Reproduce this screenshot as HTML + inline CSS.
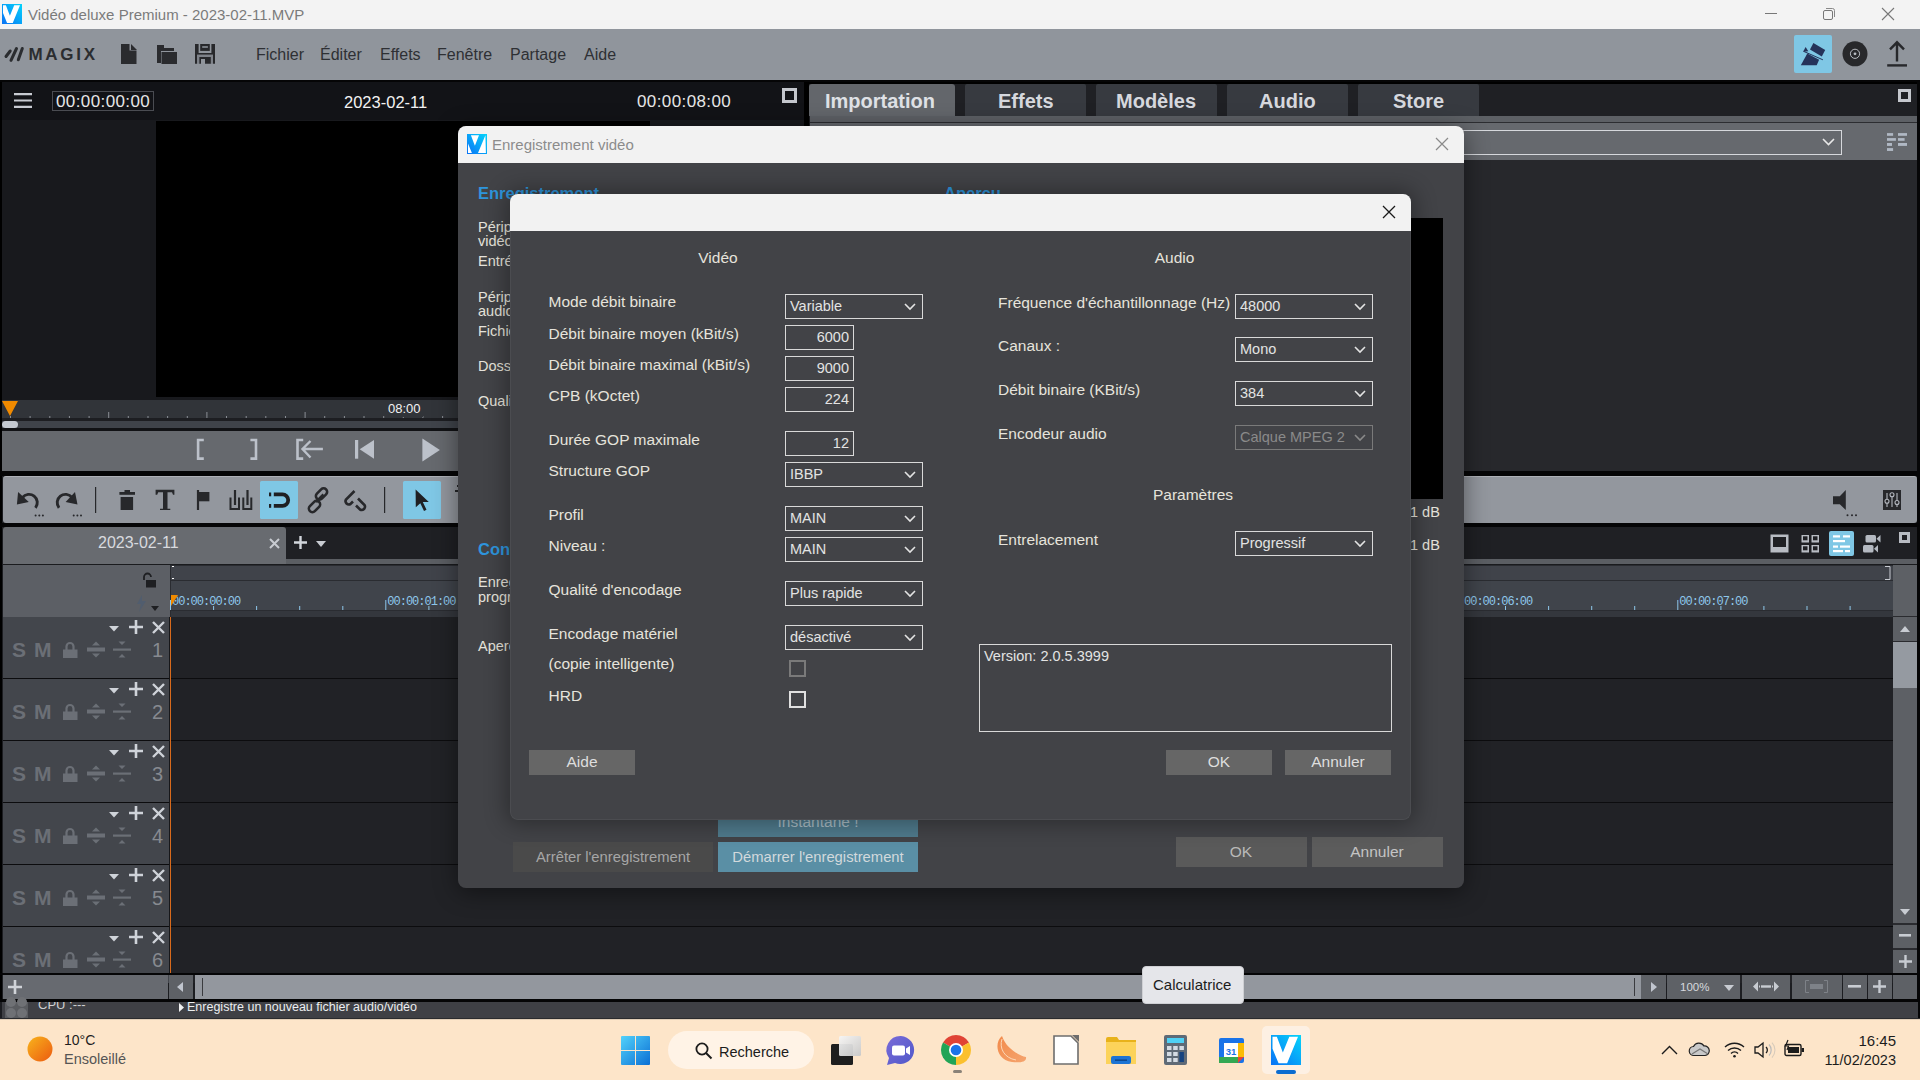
<!DOCTYPE html>
<html><head><meta charset="utf-8">
<style>
*{margin:0;padding:0;box-sizing:border-box}
html,body{width:1920px;height:1080px;overflow:hidden;background:#1c1d21;font-family:"Liberation Sans",sans-serif}
.a{position:absolute}
.t{position:absolute;white-space:nowrap;line-height:1}
svg{position:absolute;overflow:visible}
</style></head><body>
<!-- ============ TITLE BAR ============ -->
<div class="a" style="left:0;top:0;width:1920px;height:29px;background:#f3f3f3"></div>
<svg style="left:2px;top:4px" width="20" height="20" viewBox="0 0 20 20"><defs><linearGradient id="vg" x1="0" y1="1" x2="1" y2="0"><stop offset="0" stop-color="#0a72f5"/><stop offset="1" stop-color="#05d4fb"/></linearGradient></defs><rect width="20" height="20" fill="url(#vg)"/><path d="M1 1.2 L3.9 1.2 L7.9 11.7 L12.2 1.2 L18 1.2 L10.75 18.9 L5.05 18.9 L1 9.1 Z" fill="#fff"/></svg>
<div class="t" style="left:28px;top:7px;font-size:15px;color:#7b7b7b">Vidéo deluxe Premium - 2023-02-11.MVP</div>
<div class="a" style="left:1765px;top:13px;width:12px;height:1px;background:#777"></div>
<svg style="left:1822px;top:7px" width="14" height="14" viewBox="0 0 14 14"><rect x="1.5" y="3.5" width="9" height="9" rx="1.5" fill="none" stroke="#777" stroke-width="1"/><path d="M4 1.5 H10.5 a2 2 0 0 1 2 2 V10" fill="none" stroke="#888" stroke-width="1"/></svg>
<svg style="left:1882px;top:8px" width="12" height="12" viewBox="0 0 12 12"><path d="M0 0 L12 12 M12 0 L0 12" stroke="#777" stroke-width="1.1"/></svg>

<!-- ============ MENU BAR ============ -->
<div class="a" style="left:0;top:29px;width:1920px;height:51px;background:#90959c"></div>
<svg style="left:0;top:40px" width="28" height="26" viewBox="0 40 28 26"><path d="M6 56.5 L10.2 51 M11 60.3 L16.5 48.5 M18.3 59.8 L22.3 48.5" stroke="#2b2d30" stroke-width="3" stroke-linecap="round"/></svg>
<div class="t" style="left:28.5px;top:46px;font-size:17px;font-weight:bold;color:#2b2d30;letter-spacing:2.7px">MAGIX</div>
<svg style="left:121px;top:44px" width="16" height="20" viewBox="0 0 16 20"><path d="M0 0 H8.5 V6.5 H15.5 V20 H0 Z" fill="#2a2b2e"/><path d="M10 0 L16 6 H10 Z" fill="#2a2b2e"/></svg>
<svg style="left:157px;top:45px" width="20" height="19" viewBox="0 0 20 19"><path d="M0 0 H7 V3 H17 V6 H4 V18 H0 Z" fill="#2a2b2e"/><path d="M4.5 7 H20 V19 H4.5 Z" fill="#2a2b2e"/></svg>
<svg style="left:190px;top:40px" width="30" height="28" viewBox="0 0 30 28"><g fill="#27282b"><path d="M5 4 H8.6 V13 H21.4 V4 H25 V23.7 H23 V14.8 H7 V23.7 H5 Z"/><rect x="10.2" y="4" width="9.6" height="6.9"/><path d="M9.2 17 H20.9 V23.7 H15 V18.9 H11 V23.7 H9.2 Z"/></g><rect x="12.2" y="6.1" width="5.7" height="1.8" fill="#80848b"/><rect x="7" y="14.8" width="2.2" height="8.9" fill="#7e8289"/><rect x="20.9" y="14.8" width="2.1" height="8.9" fill="#7e8289"/><rect x="9.2" y="14.8" width="11.7" height="2.2" fill="#7e8289"/></svg>
<div class="t" style="left:256px;top:46.5px;font-size:16px;color:#2e3034">Fichier</div>
<div class="t" style="left:320px;top:46.5px;font-size:16px;color:#2e3034">Éditer</div>
<div class="t" style="left:380px;top:46.5px;font-size:16px;color:#2e3034">Effets</div>
<div class="t" style="left:437px;top:46.5px;font-size:16px;color:#2e3034">Fenêtre</div>
<div class="t" style="left:510px;top:46.5px;font-size:16px;color:#2e3034">Partage</div>
<div class="t" style="left:584px;top:46.5px;font-size:16px;color:#2e3034">Aide</div>
<div class="a" style="left:1794px;top:35px;width:38px;height:38px;background:#7fc7e5;border-radius:2px"></div>
<svg style="left:1794px;top:35px" width="38" height="38" viewBox="0 0 38 38"><path d="M19.4 7.9 L31.2 15 L27.8 21.4 L16 14.6 Z" fill="#25335a"/><path d="M13.3 18.4 L25.1 24.8 L22.7 30.2 L6.8 30.2 Z" fill="#25335a"/><path d="M11.6 11.9 L9.2 16.7 L14.3 16.3 Z" fill="#25335a"/><path d="M9.5 16.3 L28.9 24.8" stroke="#25335a" stroke-width="1"/></svg>
<svg style="left:1842px;top:41px" width="26" height="26" viewBox="0 0 26 26"><circle cx="13" cy="12.8" r="12.5" fill="#27282b"/><circle cx="13" cy="12.8" r="4.6" fill="none" stroke="#b8bcc2" stroke-width="1"/><circle cx="13" cy="12.8" r="1.4" fill="#b8bcc2"/></svg>
<svg style="left:1886px;top:41px" width="22" height="27" viewBox="0 0 22 27"><path d="M11 1.5 V20.5 M4 8.3 L11 1.3 L18 8.3" fill="none" stroke="#27282b" stroke-width="2.4"/><rect x="1.2" y="23.2" width="19.8" height="2.4" fill="#27282b"/></svg>
<div class="a" style="left:0;top:80px;width:1920px;height:2px;background:#050506"></div>

<!-- ============ LEFT PREVIEW PANEL ============ -->
<div class="a" style="left:0;top:82px;width:2px;height:920px;background:#000"></div>
<div class="a" style="left:2px;top:82px;width:802px;height:38px;background:#121317"></div>
<svg style="left:14px;top:93px" width="18" height="15" viewBox="0 0 18 15"><path d="M0 1.2 H18 M0 7.5 H18 M0 13.8 H18" stroke="#c8cbd2" stroke-width="2.2"/></svg>
<div class="a" style="left:52px;top:91px;width:102px;height:20px;border:1px solid #4a4c52"></div>
<div class="t" style="left:56px;top:93px;font-size:17px;color:#e6e6e6;letter-spacing:0.4px">00:00:00:00</div>
<div class="t" style="left:344px;top:93.5px;font-size:16.5px;color:#f2f2f2">2023-02-11</div>
<div class="t" style="left:637px;top:93px;font-size:17px;color:#e6e6e6;letter-spacing:0.4px">00:00:08:00</div>
<div class="a" style="left:782px;top:88px;width:15px;height:15px;border:3px solid #c4c7cd"></div>
<div class="a" style="left:2px;top:120px;width:804px;height:280px;background:#18191d"></div>
<div class="a" style="left:156px;top:121px;width:494px;height:276px;background:#000"></div>
<!-- ruler -->
<div class="a" style="left:2px;top:400px;width:804px;height:18px;background:#313439"></div>
<svg style="left:0;top:400px" width="806" height="18" viewBox="0 0 806 18"><g fill="#8a8e95"><rect x="10.0" y="16" width="1" height="2"/><rect x="29.6" y="16" width="1" height="2"/><rect x="49.3" y="16" width="1" height="2"/><rect x="68.9" y="16" width="1" height="2"/><rect x="88.6" y="16" width="1" height="2"/><rect x="108.2" y="12" width="1" height="6"/><rect x="127.8" y="16" width="1" height="2"/><rect x="147.5" y="16" width="1" height="2"/><rect x="167.1" y="16" width="1" height="2"/><rect x="186.8" y="16" width="1" height="2"/><rect x="206.4" y="12" width="1" height="6"/><rect x="226.0" y="16" width="1" height="2"/><rect x="245.7" y="16" width="1" height="2"/><rect x="265.3" y="16" width="1" height="2"/><rect x="285.0" y="16" width="1" height="2"/><rect x="304.6" y="12" width="1" height="6"/><rect x="324.2" y="16" width="1" height="2"/><rect x="343.9" y="16" width="1" height="2"/><rect x="363.5" y="16" width="1" height="2"/><rect x="383.2" y="16" width="1" height="2"/><rect x="402.8" y="12" width="1" height="6"/><rect x="422.4" y="16" width="1" height="2"/><rect x="442.1" y="16" width="1" height="2"/><rect x="461.7" y="16" width="1" height="2"/><rect x="481.4" y="16" width="1" height="2"/><rect x="501.0" y="12" width="1" height="6"/><rect x="520.6" y="16" width="1" height="2"/><rect x="540.3" y="16" width="1" height="2"/><rect x="559.9" y="16" width="1" height="2"/><rect x="579.6" y="16" width="1" height="2"/><rect x="599.2" y="12" width="1" height="6"/><rect x="618.8" y="16" width="1" height="2"/><rect x="638.5" y="16" width="1" height="2"/><rect x="658.1" y="16" width="1" height="2"/><rect x="677.8" y="16" width="1" height="2"/><rect x="697.4" y="12" width="1" height="6"/><rect x="717.0" y="16" width="1" height="2"/><rect x="736.7" y="16" width="1" height="2"/><rect x="756.3" y="16" width="1" height="2"/><rect x="776.0" y="16" width="1" height="2"/><rect x="795.6" y="12" width="1" height="6"/></g></svg>
<svg style="left:2px;top:401px" width="16" height="15" viewBox="0 0 16 15"><path d="M0 0 H16 L8 15 Z" fill="#f08a00"/></svg>
<div class="t" style="left:386px;top:402px;font-size:13px;color:#f2f2f2;background:#313439;padding:0 2px 2px 2px">08:00</div>
<div class="a" style="left:2px;top:418px;width:804px;height:3px;background:#1d1e22"></div>
<div class="a" style="left:2px;top:421px;width:804px;height:7px;background:#3f434a"></div>
<div class="a" style="left:2px;top:421px;width:16px;height:7px;background:#c4c9d1;border-radius:4px"></div>
<div class="a" style="left:2px;top:428px;width:804px;height:3px;background:#111215"></div>
<!-- transport -->
<div class="a" style="left:2px;top:431px;width:806px;height:40px;background:#66696e"></div>
<svg style="left:0;top:430px" width="460" height="42" viewBox="0 430 460 42"><g fill="none" stroke="#bcc1ca" stroke-width="2.6">
<path d="M203.8 440 H198.1 V458.6 H203.8"/>
<path d="M250.4 440 H256 V458.6 H250.4"/>
<path d="M303.2 440 H297.5 V458.6 H303.2"/>
<path d="M322.9 449 H303.5 M310.5 441 L302.5 449 L310.5 457.5" stroke-width="2.4"/>
</g><g fill="#bcc1ca">
<rect x="355" y="440" width="3.2" height="18.7"/>
<path d="M374 440 V458.7 L359.7 449.35 Z"/>
<path d="M422.4 438.5 V461.4 L439.9 449.95 Z"/>
</g></svg>
<div class="a" style="left:0;top:471px;width:1920px;height:5px;background:#050506"></div>

<!-- ============ RIGHT PANEL ============ -->
<div class="a" style="left:804px;top:82px;width:5px;height:389px;background:#000"></div>
<div class="a" style="left:809px;top:82px;width:1108px;height:2px;background:#000"></div><div class="a" style="left:809px;top:84px;width:1108px;height:33px;background:#1f2024"></div>
<div class="a" style="left:809px;top:84px;width:146px;height:32px;background:#63666b;border-radius:3px 3px 0 0"></div>
<div class="t" style="left:825px;top:91px;font-size:20px;font-weight:bold;color:#dfe1e6">Importation</div>
<div class="a" style="left:965px;top:84px;width:121px;height:32px;background:#373a40;border-radius:2px 2px 0 0"></div>
<div class="t" style="left:998px;top:91px;font-size:20px;font-weight:bold;color:#d6d8de">Effets</div>
<div class="a" style="left:1096px;top:84px;width:121px;height:32px;background:#373a40;border-radius:2px 2px 0 0"></div>
<div class="t" style="left:1116px;top:91px;font-size:20px;font-weight:bold;color:#d6d8de">Modèles</div>
<div class="a" style="left:1227px;top:84px;width:121px;height:32px;background:#373a40;border-radius:2px 2px 0 0"></div>
<div class="t" style="left:1259px;top:91px;font-size:20px;font-weight:bold;color:#d6d8de">Audio</div>
<div class="a" style="left:1358px;top:84px;width:121px;height:32px;background:#373a40;border-radius:2px 2px 0 0"></div>
<div class="t" style="left:1393px;top:91px;font-size:20px;font-weight:bold;color:#d6d8de">Store</div>
<div class="a" style="left:1898px;top:89px;width:13px;height:13px;border:3px solid #c4c7cd"></div>
<div class="a" style="left:810px;top:116px;width:1107px;height:7px;background:#5d6065;border-bottom:1px solid #2c2d31"></div>
<div class="a" style="left:810px;top:123px;width:1107px;height:37px;background:#66696e"></div>
<div class="a" style="left:1300px;top:130px;width:542px;height:25px;border:1px solid #d6d8dc;background:#66696e"></div>
<svg style="left:1822px;top:138px" width="13" height="8" viewBox="0 0 13 8"><path d="M1 1 L6.5 6.5 L12 1" fill="none" stroke="#e8e8e8" stroke-width="1.6"/></svg>
<svg style="left:1880px;top:128px" width="32" height="28" viewBox="0 0 32 28"><g fill="#b0b8c4"><rect x="7" y="5.1" width="6.1" height="2.7"/><rect x="18" y="5.1" width="9" height="2.7"/><rect x="7" y="10.1" width="8.9" height="2.7"/><rect x="18" y="10.1" width="6.6" height="2.7"/><rect x="7" y="15" width="5" height="2.9"/><rect x="18" y="15" width="9" height="2.9"/><rect x="7" y="20.1" width="6.1" height="2.85"/></g></svg>
<div class="a" style="left:810px;top:160px;width:1107px;height:311px;background:#27282c"></div>
<div class="a" style="left:1917px;top:82px;width:3px;height:937px;background:#060607"></div>

<!-- ============ TOOLBAR ============ -->
<div class="a" style="left:3px;top:476px;width:1914px;height:47px;background:#93979e;border-radius:3px;border-top:1px solid #aeb1b7"></div>
<svg style="left:0;top:476px" width="460" height="47" viewBox="0 476 460 47">
<g fill="#27282b" stroke="none">
<path d="M16.9 504.4 L18.1 491.9 L28.75 501.9 Z"/>
<circle cx="35.6" cy="515.4" r="1"/><circle cx="39.3" cy="515.4" r="1"/><circle cx="42.9" cy="515.4" r="1"/>
<path d="M77.5 504.4 L75 491.9 L65.6 501.9 Z"/>
<circle cx="73.7" cy="515.4" r="1"/><circle cx="77.4" cy="515.4" r="1"/><circle cx="81" cy="515.4" r="1"/>
<rect x="95" y="487" width="1.2" height="26"/>
<rect x="119.4" y="492" width="15.6" height="2.8"/><rect x="124.5" y="490" width="5.5" height="2.5"/><path d="M120.6 497 H133.1 V510 H120.6 Z"/>
<path d="M155.6 489.8 H174.4 V494.8 H173 L172 492.2 H167.5 V508.7 H170.3 V510 H160 V508.7 H163 V492.2 H158.2 L157.2 494.8 H155.6 Z"/>
<rect x="196.9" y="490" width="2.2" height="20"/><rect x="199" y="492" width="10.4" height="9.3"/>
<rect x="384" y="487" width="1.2" height="26"/>
</g>
<g fill="none" stroke="#27282b">
<path d="M22.5 497.5 A7.2 7.2 0 1 1 35.5 507.8" stroke-width="2.9"/>
<path d="M72 497.5 A7.2 7.2 0 1 0 59 507.8" stroke-width="2.9"/>
<path d="M230.5 497.5 V509 H239 V497.5 M243.3 497.5 V509 H251.3 V497.5" stroke-width="2"/>
<path d="M235 490 V505 M247.5 490 V505" stroke-width="2.2"/>
</g>
<rect x="260" y="481" width="38" height="38" rx="1.5" fill="#7fc7e5"/>
<path d="M273.8 494.4 H282.5 A5.7 5.7 0 0 1 282.5 505.8 H273.8" fill="none" stroke="#1f2023" stroke-width="3.8"/>
<rect x="269" y="492.5" width="2.2" height="3.8" fill="#1f2023"/><rect x="269" y="504" width="2.2" height="3.8" fill="#1f2023"/>
<g fill="none" stroke="#27282b" stroke-width="2.6">
<rect x="318" y="487.5" width="7" height="13" rx="3.5" transform="rotate(45 321.5 494)"/>
<rect x="311" y="500" width="7" height="13" rx="3.5" transform="rotate(45 314.5 506.5)"/>
<path d="M316 502 L323.5 494.5"/>
<path d="M354.5 491 L346 499.5 A3.3 3.3 0 0 0 350.5 504 L353 501.5"/>
<path d="M358 498.5 L364.5 505 A3.3 3.3 0 0 1 360 509.5 L356 505.5"/>
</g>
<rect x="403" y="481" width="38" height="38" rx="1.5" fill="#7fc7e5"/>
<path d="M415.6 489.4 L428.8 501.9 L422.8 502 L426.5 509.8 L424 511 L420.3 503.2 L415.8 507.2 Z" fill="#1f2023"/>
<path d="M457 486 H460 M455 491 H460" stroke="#27282b" stroke-width="2.2"/>
</svg>
<svg style="left:1833px;top:490px" width="25" height="27" viewBox="0 0 25 27"><path d="M0 6.2 H6.8 L12.8 0 V20 L6.8 14.2 H0 Z" fill="#27282b"/><circle cx="14.5" cy="25.2" r="1" fill="#27282b"/><circle cx="19" cy="25.2" r="1" fill="#27282b"/><circle cx="23" cy="25.2" r="1" fill="#27282b"/></svg>
<svg style="left:1883px;top:490px" width="18" height="20" viewBox="0 0 18 20"><rect x="0" y="0" width="18" height="20" fill="#27282b"/><path d="M4 3 V17 M9 3 V17 M14 3 V17" stroke="#b4b8bf" stroke-width="1.1"/><circle cx="4" cy="11.2" r="2" fill="#27282b" stroke="#b4b8bf" stroke-width="1.1"/><circle cx="9" cy="4.8" r="2" fill="#27282b" stroke="#b4b8bf" stroke-width="1.1"/><circle cx="14" cy="12.5" r="2" fill="#27282b" stroke="#b4b8bf" stroke-width="1.1"/></svg>
<div class="a" style="left:0;top:523px;width:1920px;height:4px;background:#050506"></div>

<!-- ============ TIMELINE ============ -->
<div class="a" style="left:3px;top:527px;width:1914px;height:32px;background:#1f2024"></div>
<div class="a" style="left:3px;top:527px;width:283px;height:38px;background:#686b70;border-radius:3px 3px 0 0"></div>
<div class="t" style="left:98px;top:535px;font-size:16px;color:#d8dadf">2023-02-11</div>
<svg style="left:269px;top:538px" width="11" height="11" viewBox="0 0 11 11"><path d="M1 1 L10 10 M10 1 L1 10" stroke="#c8cbd1" stroke-width="2"/></svg>
<svg style="left:294px;top:536px" width="13" height="13" viewBox="0 0 13 13"><path d="M6.5 0 V13 M0 6.5 H13" stroke="#d2d6dc" stroke-width="2.4"/></svg>
<svg style="left:316px;top:541px" width="10" height="6" viewBox="0 0 10 6"><path d="M0 0 H10 L5 6 Z" fill="#c8ccd2"/></svg>
<div class="a" style="left:286px;top:559px;width:1631px;height:6px;background:#5b5e63"></div>
<svg style="left:1770px;top:534px" width="19" height="19" viewBox="0 0 19 19"><rect x="0.5" y="0.5" width="18" height="18" fill="#b8bcc3"/><rect x="3" y="3" width="13" height="10" fill="#1f2024"/></svg>
<svg style="left:1801px;top:534px" width="19" height="19" viewBox="0 0 19 19"><g fill="#b8bcc3"><rect x="0.5" y="1" width="7.5" height="7.5"/><rect x="10.5" y="1" width="7.5" height="7.5"/><rect x="0.5" y="11" width="7.5" height="7.5"/><rect x="10.5" y="11" width="7.5" height="7.5"/></g><g fill="#1f2024"><rect x="2" y="2.3" width="4.5" height="4"/><rect x="12" y="2.3" width="4.5" height="4"/><rect x="2" y="12.3" width="4.5" height="4"/><rect x="12" y="12.3" width="4.5" height="4"/></g></svg>
<div class="a" style="left:1829px;top:531px;width:25px;height:25px;background:#7fc7e5;border-radius:2px"></div>
<svg style="left:1829px;top:531px" width="25" height="25" viewBox="0 0 25 25"><g fill="#fff"><rect x="4" y="4.3" width="7" height="2.2"/><rect x="14" y="4.3" width="7" height="2.2"/><rect x="4" y="9" width="12" height="2.2"/><rect x="4" y="14.5" width="5" height="2.2"/><rect x="11" y="14.5" width="10" height="2.2"/><rect x="4" y="19" width="10" height="2.2"/><rect x="16" y="19" width="5" height="2.2"/></g></svg>
<svg style="left:1863px;top:534px" width="20" height="19" viewBox="0 0 20 19"><g fill="#b4b9c1"><rect x="2.5" y="1" width="10.5" height="7.5" rx="1.5"/><path d="M13.5 4.7 L17.5 1 V8.5 Z"/><rect x="0" y="11" width="10.5" height="7.5" rx="1.5"/><path d="M11 14.7 L15 11 V18.5 Z"/></g></svg>
<div class="a" style="left:1899px;top:532px;width:11px;height:11px;border:3px solid #b8bcc3;background:#1f2024"></div>

<div class="a" style="left:3px;top:565px;width:167px;height:52px;background:#5c5f65"></div><div class="a" style="left:3px;top:564px;width:1914px;height:1px;background:#1a1b1e"></div>
<svg style="left:141px;top:572px" width="16" height="16" viewBox="0 0 16 16"><path d="M3 8 V5 A3.5 3.5 0 0 1 10 5" fill="none" stroke="#1e1f22" stroke-width="1.8"/><rect x="5" y="8" width="10" height="7.5" fill="#1e1f22"/></svg>
<svg style="left:136px;top:595px" width="11" height="17" viewBox="0 0 11 17"><path d="M6 0 L1 9 H5 L3 17 L10 6 H6 Z" fill="#515d6e"/></svg>
<svg style="left:151px;top:606px" width="8" height="5" viewBox="0 0 8 5"><path d="M0 0 H8 L4 5 Z" fill="#1e1f22"/></svg>
<div class="a" style="left:170px;top:565px;width:1723px;height:52px;background:#2a2c31"></div>
<div class="a" style="left:171px;top:566px;width:1722px;height:14px;background:#40434a"></div>
<div class="a" style="left:171px;top:581px;width:1722px;height:29px;background:#40444b"></div>
<div class="a" style="left:171px;top:611px;width:1722px;height:6px;background:#34373d"></div>
<div class="a" style="left:172px;top:566px;width:2px;height:1px;background:#fff"></div>
<div class="a" style="left:172px;top:578px;width:2px;height:1px;background:#fff"></div>
<svg style="left:1885px;top:566px" width="6" height="14" viewBox="0 0 6 14"><path d="M0 0.5 H5 V13.5 H0" fill="none" stroke="#c8ccd2" stroke-width="1"/></svg>
<svg style="left:0;top:0" width="1920" height="1080" viewBox="0 0 1920 1080"><g fill="#8ec7ea"><rect x="170.0" y="600" width="1" height="10"/><rect x="213.1" y="606" width="1" height="4"/><rect x="256.1" y="606" width="1" height="4"/><rect x="299.2" y="606" width="1" height="4"/><rect x="342.3" y="606" width="1" height="4"/><rect x="385.3" y="600" width="1" height="10"/><rect x="428.4" y="606" width="1" height="4"/><rect x="471.5" y="606" width="1" height="4"/><rect x="514.5" y="606" width="1" height="4"/><rect x="557.6" y="606" width="1" height="4"/><rect x="600.7" y="600" width="1" height="10"/><rect x="643.7" y="606" width="1" height="4"/><rect x="686.8" y="606" width="1" height="4"/><rect x="729.9" y="606" width="1" height="4"/><rect x="772.9" y="606" width="1" height="4"/><rect x="816.0" y="600" width="1" height="10"/><rect x="859.1" y="606" width="1" height="4"/><rect x="902.1" y="606" width="1" height="4"/><rect x="945.2" y="606" width="1" height="4"/><rect x="988.3" y="606" width="1" height="4"/><rect x="1031.3" y="600" width="1" height="10"/><rect x="1074.4" y="606" width="1" height="4"/><rect x="1117.5" y="606" width="1" height="4"/><rect x="1160.5" y="606" width="1" height="4"/><rect x="1203.6" y="606" width="1" height="4"/><rect x="1246.7" y="600" width="1" height="10"/><rect x="1289.7" y="606" width="1" height="4"/><rect x="1332.8" y="606" width="1" height="4"/><rect x="1375.8" y="606" width="1" height="4"/><rect x="1418.9" y="606" width="1" height="4"/><rect x="1462.0" y="600" width="1" height="10"/><rect x="1505.0" y="606" width="1" height="4"/><rect x="1548.1" y="606" width="1" height="4"/><rect x="1591.2" y="606" width="1" height="4"/><rect x="1634.2" y="606" width="1" height="4"/><rect x="1677.3" y="600" width="1" height="10"/><rect x="1720.4" y="606" width="1" height="4"/><rect x="1763.4" y="606" width="1" height="4"/><rect x="1806.5" y="606" width="1" height="4"/><rect x="1849.6" y="606" width="1" height="4"/></g></svg>
<div class="t" style="left:172.0px;top:596px;font-family:'Liberation Mono',monospace;font-size:12px;color:#8ec7ea;letter-spacing:-1px">00:00:00:00</div>
<div class="t" style="left:387.3px;top:596px;font-family:'Liberation Mono',monospace;font-size:12px;color:#8ec7ea;letter-spacing:-1px">00:00:01:00</div>
<div class="t" style="left:602.7px;top:596px;font-family:'Liberation Mono',monospace;font-size:12px;color:#8ec7ea;letter-spacing:-1px">00:00:02:00</div>
<div class="t" style="left:818.0px;top:596px;font-family:'Liberation Mono',monospace;font-size:12px;color:#8ec7ea;letter-spacing:-1px">00:00:03:00</div>
<div class="t" style="left:1033.3px;top:596px;font-family:'Liberation Mono',monospace;font-size:12px;color:#8ec7ea;letter-spacing:-1px">00:00:04:00</div>
<div class="t" style="left:1248.7px;top:596px;font-family:'Liberation Mono',monospace;font-size:12px;color:#8ec7ea;letter-spacing:-1px">00:00:05:00</div>
<div class="t" style="left:1464.0px;top:596px;font-family:'Liberation Mono',monospace;font-size:12px;color:#8ec7ea;letter-spacing:-1px">00:00:06:00</div>
<div class="t" style="left:1679.3px;top:596px;font-family:'Liberation Mono',monospace;font-size:12px;color:#8ec7ea;letter-spacing:-1px">00:00:07:00</div>
<svg style="left:171px;top:595px" width="7" height="11" viewBox="0 0 7 11"><path d="M0 0 H7 L0 11 Z" fill="#f08a00"/></svg>
<div class="a" style="left:3px;top:617px;width:166px;height:61px;background:#43464c"></div>
<div class="a" style="left:171px;top:617px;width:1722px;height:61px;background:#212226"></div>
<div class="a" style="left:3px;top:678px;width:1890px;height:1px;background:#0c0c0e"></div>
<svg style="left:109px;top:626px" width="10" height="6" viewBox="0 0 10 6"><path d="M0 0 H10 L5 5.5 Z" fill="#cfd3d9"/></svg>
<svg style="left:129px;top:620px" width="14" height="14" viewBox="0 0 14 14"><path d="M7 0 V14 M0 7 H14" stroke="#cfd3d9" stroke-width="2.6"/></svg>
<svg style="left:152px;top:621px" width="13" height="13" viewBox="0 0 13 13"><path d="M1 1 L12 12 M12 1 L1 12" stroke="#cfd3d9" stroke-width="2.4"/></svg>
<div class="t" style="left:12px;top:639px;font-size:21px;font-weight:bold;color:#6b6f76">S</div>
<div class="t" style="left:34px;top:639px;font-size:21px;font-weight:bold;color:#6b6f76">M</div>
<svg style="left:62px;top:641px" width="16" height="18" viewBox="0 0 16 18"><path d="M4.5 9 V5.5 A3.5 3.5 0 0 1 11.5 5.5 V9" fill="none" stroke="#6b6f76" stroke-width="2.2"/><rect x="1" y="8.5" width="14.5" height="8.5" fill="#6b6f76"/></svg>
<svg style="left:87px;top:641px" width="18" height="17" viewBox="0 0 18 17"><path d="M5 4.5 L9 0.5 L13 4.5 Z M5 12.5 L9 16.5 L13 12.5 Z" fill="#6b6f76"/><rect x="0" y="6.5" width="18" height="4" fill="#6b6f76"/></svg>
<svg style="left:113px;top:641px" width="18" height="17" viewBox="0 0 18 17"><path d="M5.5 0.5 L9 4 L12.5 0.5 Z M5.5 16.5 L9 13 L12.5 16.5 Z" fill="#6b6f76"/><rect x="0" y="7.5" width="18" height="2.2" fill="#6b6f76"/></svg>
<div class="t" style="left:152px;top:640px;font-size:20px;color:#878a90">1</div>
<div class="a" style="left:3px;top:679px;width:166px;height:61px;background:#43464c"></div>
<div class="a" style="left:171px;top:679px;width:1722px;height:61px;background:#212226"></div>
<div class="a" style="left:3px;top:740px;width:1890px;height:1px;background:#0c0c0e"></div>
<svg style="left:109px;top:688px" width="10" height="6" viewBox="0 0 10 6"><path d="M0 0 H10 L5 5.5 Z" fill="#cfd3d9"/></svg>
<svg style="left:129px;top:682px" width="14" height="14" viewBox="0 0 14 14"><path d="M7 0 V14 M0 7 H14" stroke="#cfd3d9" stroke-width="2.6"/></svg>
<svg style="left:152px;top:683px" width="13" height="13" viewBox="0 0 13 13"><path d="M1 1 L12 12 M12 1 L1 12" stroke="#cfd3d9" stroke-width="2.4"/></svg>
<div class="t" style="left:12px;top:701px;font-size:21px;font-weight:bold;color:#6b6f76">S</div>
<div class="t" style="left:34px;top:701px;font-size:21px;font-weight:bold;color:#6b6f76">M</div>
<svg style="left:62px;top:703px" width="16" height="18" viewBox="0 0 16 18"><path d="M4.5 9 V5.5 A3.5 3.5 0 0 1 11.5 5.5 V9" fill="none" stroke="#6b6f76" stroke-width="2.2"/><rect x="1" y="8.5" width="14.5" height="8.5" fill="#6b6f76"/></svg>
<svg style="left:87px;top:703px" width="18" height="17" viewBox="0 0 18 17"><path d="M5 4.5 L9 0.5 L13 4.5 Z M5 12.5 L9 16.5 L13 12.5 Z" fill="#6b6f76"/><rect x="0" y="6.5" width="18" height="4" fill="#6b6f76"/></svg>
<svg style="left:113px;top:703px" width="18" height="17" viewBox="0 0 18 17"><path d="M5.5 0.5 L9 4 L12.5 0.5 Z M5.5 16.5 L9 13 L12.5 16.5 Z" fill="#6b6f76"/><rect x="0" y="7.5" width="18" height="2.2" fill="#6b6f76"/></svg>
<div class="t" style="left:152px;top:702px;font-size:20px;color:#878a90">2</div>
<div class="a" style="left:3px;top:741px;width:166px;height:61px;background:#43464c"></div>
<div class="a" style="left:171px;top:741px;width:1722px;height:61px;background:#212226"></div>
<div class="a" style="left:3px;top:802px;width:1890px;height:1px;background:#0c0c0e"></div>
<svg style="left:109px;top:750px" width="10" height="6" viewBox="0 0 10 6"><path d="M0 0 H10 L5 5.5 Z" fill="#cfd3d9"/></svg>
<svg style="left:129px;top:744px" width="14" height="14" viewBox="0 0 14 14"><path d="M7 0 V14 M0 7 H14" stroke="#cfd3d9" stroke-width="2.6"/></svg>
<svg style="left:152px;top:745px" width="13" height="13" viewBox="0 0 13 13"><path d="M1 1 L12 12 M12 1 L1 12" stroke="#cfd3d9" stroke-width="2.4"/></svg>
<div class="t" style="left:12px;top:763px;font-size:21px;font-weight:bold;color:#6b6f76">S</div>
<div class="t" style="left:34px;top:763px;font-size:21px;font-weight:bold;color:#6b6f76">M</div>
<svg style="left:62px;top:765px" width="16" height="18" viewBox="0 0 16 18"><path d="M4.5 9 V5.5 A3.5 3.5 0 0 1 11.5 5.5 V9" fill="none" stroke="#6b6f76" stroke-width="2.2"/><rect x="1" y="8.5" width="14.5" height="8.5" fill="#6b6f76"/></svg>
<svg style="left:87px;top:765px" width="18" height="17" viewBox="0 0 18 17"><path d="M5 4.5 L9 0.5 L13 4.5 Z M5 12.5 L9 16.5 L13 12.5 Z" fill="#6b6f76"/><rect x="0" y="6.5" width="18" height="4" fill="#6b6f76"/></svg>
<svg style="left:113px;top:765px" width="18" height="17" viewBox="0 0 18 17"><path d="M5.5 0.5 L9 4 L12.5 0.5 Z M5.5 16.5 L9 13 L12.5 16.5 Z" fill="#6b6f76"/><rect x="0" y="7.5" width="18" height="2.2" fill="#6b6f76"/></svg>
<div class="t" style="left:152px;top:764px;font-size:20px;color:#878a90">3</div>
<div class="a" style="left:3px;top:803px;width:166px;height:61px;background:#43464c"></div>
<div class="a" style="left:171px;top:803px;width:1722px;height:61px;background:#212226"></div>
<div class="a" style="left:3px;top:864px;width:1890px;height:1px;background:#0c0c0e"></div>
<svg style="left:109px;top:812px" width="10" height="6" viewBox="0 0 10 6"><path d="M0 0 H10 L5 5.5 Z" fill="#cfd3d9"/></svg>
<svg style="left:129px;top:806px" width="14" height="14" viewBox="0 0 14 14"><path d="M7 0 V14 M0 7 H14" stroke="#cfd3d9" stroke-width="2.6"/></svg>
<svg style="left:152px;top:807px" width="13" height="13" viewBox="0 0 13 13"><path d="M1 1 L12 12 M12 1 L1 12" stroke="#cfd3d9" stroke-width="2.4"/></svg>
<div class="t" style="left:12px;top:825px;font-size:21px;font-weight:bold;color:#6b6f76">S</div>
<div class="t" style="left:34px;top:825px;font-size:21px;font-weight:bold;color:#6b6f76">M</div>
<svg style="left:62px;top:827px" width="16" height="18" viewBox="0 0 16 18"><path d="M4.5 9 V5.5 A3.5 3.5 0 0 1 11.5 5.5 V9" fill="none" stroke="#6b6f76" stroke-width="2.2"/><rect x="1" y="8.5" width="14.5" height="8.5" fill="#6b6f76"/></svg>
<svg style="left:87px;top:827px" width="18" height="17" viewBox="0 0 18 17"><path d="M5 4.5 L9 0.5 L13 4.5 Z M5 12.5 L9 16.5 L13 12.5 Z" fill="#6b6f76"/><rect x="0" y="6.5" width="18" height="4" fill="#6b6f76"/></svg>
<svg style="left:113px;top:827px" width="18" height="17" viewBox="0 0 18 17"><path d="M5.5 0.5 L9 4 L12.5 0.5 Z M5.5 16.5 L9 13 L12.5 16.5 Z" fill="#6b6f76"/><rect x="0" y="7.5" width="18" height="2.2" fill="#6b6f76"/></svg>
<div class="t" style="left:152px;top:826px;font-size:20px;color:#878a90">4</div>
<div class="a" style="left:3px;top:865px;width:166px;height:61px;background:#43464c"></div>
<div class="a" style="left:171px;top:865px;width:1722px;height:61px;background:#212226"></div>
<div class="a" style="left:3px;top:926px;width:1890px;height:1px;background:#0c0c0e"></div>
<svg style="left:109px;top:874px" width="10" height="6" viewBox="0 0 10 6"><path d="M0 0 H10 L5 5.5 Z" fill="#cfd3d9"/></svg>
<svg style="left:129px;top:868px" width="14" height="14" viewBox="0 0 14 14"><path d="M7 0 V14 M0 7 H14" stroke="#cfd3d9" stroke-width="2.6"/></svg>
<svg style="left:152px;top:869px" width="13" height="13" viewBox="0 0 13 13"><path d="M1 1 L12 12 M12 1 L1 12" stroke="#cfd3d9" stroke-width="2.4"/></svg>
<div class="t" style="left:12px;top:887px;font-size:21px;font-weight:bold;color:#6b6f76">S</div>
<div class="t" style="left:34px;top:887px;font-size:21px;font-weight:bold;color:#6b6f76">M</div>
<svg style="left:62px;top:889px" width="16" height="18" viewBox="0 0 16 18"><path d="M4.5 9 V5.5 A3.5 3.5 0 0 1 11.5 5.5 V9" fill="none" stroke="#6b6f76" stroke-width="2.2"/><rect x="1" y="8.5" width="14.5" height="8.5" fill="#6b6f76"/></svg>
<svg style="left:87px;top:889px" width="18" height="17" viewBox="0 0 18 17"><path d="M5 4.5 L9 0.5 L13 4.5 Z M5 12.5 L9 16.5 L13 12.5 Z" fill="#6b6f76"/><rect x="0" y="6.5" width="18" height="4" fill="#6b6f76"/></svg>
<svg style="left:113px;top:889px" width="18" height="17" viewBox="0 0 18 17"><path d="M5.5 0.5 L9 4 L12.5 0.5 Z M5.5 16.5 L9 13 L12.5 16.5 Z" fill="#6b6f76"/><rect x="0" y="7.5" width="18" height="2.2" fill="#6b6f76"/></svg>
<div class="t" style="left:152px;top:888px;font-size:20px;color:#878a90">5</div>
<div class="a" style="left:3px;top:927px;width:166px;height:56px;background:#43464c"></div>
<div class="a" style="left:171px;top:927px;width:1722px;height:56px;background:#212226"></div>
<svg style="left:109px;top:936px" width="10" height="6" viewBox="0 0 10 6"><path d="M0 0 H10 L5 5.5 Z" fill="#cfd3d9"/></svg>
<svg style="left:129px;top:930px" width="14" height="14" viewBox="0 0 14 14"><path d="M7 0 V14 M0 7 H14" stroke="#cfd3d9" stroke-width="2.6"/></svg>
<svg style="left:152px;top:931px" width="13" height="13" viewBox="0 0 13 13"><path d="M1 1 L12 12 M12 1 L1 12" stroke="#cfd3d9" stroke-width="2.4"/></svg>
<div class="t" style="left:12px;top:949px;font-size:21px;font-weight:bold;color:#6b6f76">S</div>
<div class="t" style="left:34px;top:949px;font-size:21px;font-weight:bold;color:#6b6f76">M</div>
<svg style="left:62px;top:951px" width="16" height="18" viewBox="0 0 16 18"><path d="M4.5 9 V5.5 A3.5 3.5 0 0 1 11.5 5.5 V9" fill="none" stroke="#6b6f76" stroke-width="2.2"/><rect x="1" y="8.5" width="14.5" height="8.5" fill="#6b6f76"/></svg>
<svg style="left:87px;top:951px" width="18" height="17" viewBox="0 0 18 17"><path d="M5 4.5 L9 0.5 L13 4.5 Z M5 12.5 L9 16.5 L13 12.5 Z" fill="#6b6f76"/><rect x="0" y="6.5" width="18" height="4" fill="#6b6f76"/></svg>
<svg style="left:113px;top:951px" width="18" height="17" viewBox="0 0 18 17"><path d="M5.5 0.5 L9 4 L12.5 0.5 Z M5.5 16.5 L9 13 L12.5 16.5 Z" fill="#6b6f76"/><rect x="0" y="7.5" width="18" height="2.2" fill="#6b6f76"/></svg>
<div class="t" style="left:152px;top:950px;font-size:20px;color:#878a90">6</div>
<div class="a" style="left:169px;top:617px;width:1px;height:356px;background:#16171a"></div>
<div class="a" style="left:170px;top:617px;width:1px;height:356px;background:#d86a1c"></div>
<div class="a" style="left:1893px;top:565px;width:24px;height:408px;background:#5d6065"></div>
<div class="a" style="left:1893px;top:616px;width:24px;height:1px;background:#2a2b2f"></div>
<svg style="left:1900px;top:626px" width="10" height="6" viewBox="0 0 10 6"><path d="M0 6 H10 L5 0 Z" fill="#c8ccd2"/></svg>
<div class="a" style="left:1893px;top:641px;width:24px;height:1px;background:#2a2b2f"></div>
<div class="a" style="left:1893px;top:642px;width:24px;height:46px;background:#959aa1"></div>
<svg style="left:1900px;top:909px" width="10" height="6" viewBox="0 0 10 6"><path d="M0 0 H10 L5 6 Z" fill="#c8ccd2"/></svg>
<div class="a" style="left:1893px;top:923px;width:24px;height:2px;background:#2a2b2f"></div>
<svg style="left:1899px;top:934px" width="12" height="3" viewBox="0 0 12 3"><rect width="12" height="2.6" fill="#c8ccd2"/></svg>
<div class="a" style="left:1893px;top:948px;width:24px;height:2px;background:#2a2b2f"></div>
<svg style="left:1899px;top:955px" width="13" height="13" viewBox="0 0 13 13"><path d="M6.5 0 V13 M0 6.5 H13" stroke="#c8ccd2" stroke-width="2.4"/></svg>
<div class="a" style="left:0;top:973px;width:1920px;height:2px;background:#050506"></div>
<div class="a" style="left:3px;top:975px;width:165px;height:24px;background:#676a70"></div>
<svg style="left:8px;top:980px" width="14" height="14" viewBox="0 0 14 14"><path d="M7 0 V14 M0 7 H14" stroke="#d0d3d8" stroke-width="2.6"/></svg>
<div class="a" style="left:169px;top:975px;width:24px;height:24px;background:#5e6166"></div>
<svg style="left:177px;top:982px" width="6" height="10" viewBox="0 0 6 10"><path d="M6 0 V10 L0 5 Z" fill="#c0c5ce"/></svg>
<div class="a" style="left:195px;top:975px;width:1446px;height:24px;background:#93979e"></div>
<div class="a" style="left:202px;top:978px;width:1px;height:18px;background:#3a3b3f"></div>
<div class="a" style="left:1634px;top:978px;width:1px;height:18px;background:#3a3b3f"></div>
<div class="a" style="left:1641px;top:975px;width:25px;height:24px;background:#5e6166"></div>
<svg style="left:1651px;top:982px" width="6" height="10" viewBox="0 0 6 10"><path d="M0 0 V10 L6 5 Z" fill="#c0c5ce"/></svg>
<div class="a" style="left:1667px;top:975px;width:73px;height:24px;background:#5e6166"></div>
<div class="t" style="left:1680px;top:982px;font-size:11.5px;color:#d6d9de">100%</div>
<svg style="left:1724px;top:985px" width="10" height="6" viewBox="0 0 10 6"><path d="M0 0 H10 L5 6 Z" fill="#c8ccd2"/></svg>
<div class="a" style="left:1742px;top:975px;width:48px;height:24px;background:#5e6166"></div>
<svg style="left:1753px;top:981px" width="26" height="11" viewBox="0 0 26 11"><path d="M0 5.5 L5 0.5 V10.5 Z M26 5.5 L21 0.5 V10.5 Z" fill="#c8ccd2"/><rect x="8" y="4.3" width="10" height="2.4" fill="#c8ccd2"/><rect x="6" y="4.5" width="1" height="2" fill="#c8ccd2"/><rect x="19" y="4.5" width="1" height="2" fill="#c8ccd2"/></svg>
<div class="a" style="left:1792px;top:975px;width:50px;height:24px;background:#5e6166"></div>
<svg style="left:1805px;top:980px" width="23" height="13" viewBox="0 0 23 13"><path d="M4 0.5 H0.5 V12.5 H4 M19 0.5 H22.5 V12.5 H19" fill="none" stroke="#7e8288" stroke-width="1"/><rect x="5" y="4" width="13" height="5" fill="#7e8288"/></svg>
<div class="a" style="left:1843px;top:975px;width:24px;height:24px;background:#5e6166"></div>
<svg style="left:1848px;top:985px" width="13" height="3" viewBox="0 0 13 3"><rect width="13" height="2.6" fill="#c8ccd2"/></svg>
<div class="a" style="left:1868px;top:975px;width:24px;height:24px;background:#5e6166"></div>
<svg style="left:1873px;top:980px" width="13" height="13" viewBox="0 0 13 13"><path d="M6.5 0 V13 M0 6.5 H13" stroke="#c8ccd2" stroke-width="2.4"/></svg>
<div class="a" style="left:1893px;top:975px;width:24px;height:24px;background:#5e6166"></div>
<div class="a" style="left:0;top:999px;width:1920px;height:3px;background:#050506"></div>
<div class="a" style="left:2px;top:1002px;width:1916px;height:17px;background:#3f4045"></div>
<svg style="left:5px;top:1002px" width="23" height="16" viewBox="0 0 23 16"><rect width="23" height="16" fill="#5a5c60"/><circle cx="6" cy="11" r="5" fill="#6f7175"/><circle cx="17" cy="11" r="5" fill="#6f7175"/><circle cx="6" cy="0" r="5" fill="#6f7175"/><circle cx="17" cy="0" r="5" fill="#6f7175"/></svg>
<div class="a" style="left:0;top:1002px;width:1920px;height:17px;overflow:hidden"><div class="t" style="left:38px;top:-4px;font-size:13px;color:#cfd0d2">CPU :---</div></div>
<svg style="left:179px;top:1003px" width="5" height="9" viewBox="0 0 5 9"><path d="M0 0 V9 L5 4.5 Z" fill="#f0f0f0"/></svg>
<div class="t" style="left:187px;top:1001px;font-size:12.5px;color:#eceef0">Enregistre un nouveau fichier audio/vidéo</div>
<div class="a" style="left:0;top:1018px;width:1920px;height:1px;background:#2a2b2e"></div>
<!-- ============ DIALOGS ============ -->
<div class="a" style="left:458px;top:126px;width:1006px;height:762px;border-radius:8px;overflow:hidden;box-shadow:0 4px 24px rgba(0,0,0,0.45)">
<div class="a" style="left:0;top:0;width:1006px;height:762px;background:#424347"></div>
<div class="a" style="left:0;top:0;width:1006px;height:37px;background:#f2f2f2"></div>
</div>
<svg style="left:467px;top:134px" width="20" height="20" viewBox="0 0 20 20"><defs><linearGradient id="vg3" x1="0" y1="1" x2="1" y2="0"><stop offset="0" stop-color="#0a72f5"/><stop offset="1" stop-color="#05d4fb"/></linearGradient></defs><rect width="20" height="20" fill="url(#vg3)"/><path d="M3.9 1.2 L12 1.2 L7.9 11.7 Z M1 9.6 L4.9 18.9 L1 18.9 Z M18.4 1.2 L18.9 18.9 L11 18.9 Z" fill="#fff"/></svg>
<div class="t" style="left:492.0px;top:137.3px;font-size:15px;color:#8c8c8c;">Enregistrement vidéo</div>
<svg style="left:1436px;top:138px" width="12" height="12" viewBox="0 0 12 12"><path d="M0 0 L12 12 M12 0 L0 12" stroke="#8a8a8a" stroke-width="1.2"/></svg>
<div class="t" style="left:478.0px;top:184.5px;font-size:16.5px;color:#2e95dd;font-weight:bold;">Enregistrement</div>
<div class="t" style="left:944.0px;top:184.5px;font-size:16.5px;color:#2e95dd;font-weight:bold;">Aperçu</div>
<div class="t" style="left:478.0px;top:219.7px;font-size:14.5px;color:#e6e3dc;">Périphérique</div>
<div class="t" style="left:478.0px;top:233.7px;font-size:14.5px;color:#e6e3dc;">vidéo</div>
<div class="t" style="left:478.0px;top:253.7px;font-size:14.5px;color:#e6e3dc;">Entrée</div>
<div class="t" style="left:478.0px;top:289.7px;font-size:14.5px;color:#e6e3dc;">Périphérique</div>
<div class="t" style="left:478.0px;top:304.2px;font-size:14.5px;color:#e6e3dc;">audio</div>
<div class="t" style="left:478.0px;top:323.7px;font-size:14.5px;color:#e6e3dc;">Fichier</div>
<div class="t" style="left:478.0px;top:358.7px;font-size:14.5px;color:#e6e3dc;">Dossier</div>
<div class="t" style="left:478.0px;top:393.7px;font-size:14.5px;color:#e6e3dc;">Qualité</div>
<div class="t" style="left:478.0px;top:574.7px;font-size:14.5px;color:#e6e3dc;">Enregistrement</div>
<div class="t" style="left:478.0px;top:589.7px;font-size:14.5px;color:#e6e3dc;">programmé</div>
<div class="t" style="left:478.0px;top:638.7px;font-size:14.5px;color:#e6e3dc;">Aperçu</div>
<div class="t" style="left:478.0px;top:540.5px;font-size:16.5px;color:#2e95dd;font-weight:bold;">Contrôle</div>
<div class="a" style="left:1411px;top:218px;width:32px;height:281px;background:#000"></div>
<div class="t" style="left:1410.0px;top:505.2px;font-size:14.5px;color:#e6e3dc;">1 dB</div>
<div class="t" style="left:1410.0px;top:537.7px;font-size:14.5px;color:#e6e3dc;">1 dB</div>
<div class="a" style="left:718px;top:800px;width:200px;height:37px;background:#4f7a8c"></div>
<div class="t" style="left:618.0px;top:813.9px;width:400px;text-align:center;font-size:15.5px;color:#a9bcc4;">Instantané !</div>
<div class="a" style="left:513px;top:842px;width:200px;height:30px;background:#4a4a4a"></div>
<div class="t" style="left:413.0px;top:850px;width:400px;text-align:center;font-size:14.8px;color:#a6a6a6;">Arrêter l'enregistrement</div>
<div class="a" style="left:718px;top:842px;width:200px;height:30px;background:#5a8fa5"></div>
<div class="t" style="left:618.0px;top:850px;width:400px;text-align:center;font-size:14.8px;color:#d2d9dc;">Démarrer l'enregistrement</div>
<div class="a" style="left:1176px;top:837px;width:131px;height:30px;background:#5a5a5a"></div>
<div class="t" style="left:1041.0px;top:843.9px;width:400px;text-align:center;font-size:15.5px;color:#b9b9b9;">OK</div>
<div class="a" style="left:1312px;top:837px;width:131px;height:30px;background:#5c5c5c"></div>
<div class="t" style="left:1177.0px;top:843.9px;width:400px;text-align:center;font-size:15.5px;color:#c4c4c4;">Annuler</div>
<div class="a" style="left:510px;top:194px;width:901px;height:626px;border-radius:8px;overflow:hidden;box-shadow:0 0 22px 4px rgba(0,0,0,0.33)">
<div class="a" style="left:0;top:0;width:901px;height:626px;background:#424347;border:1px solid #4b4c50;border-top:none;border-radius:0 0 8px 8px"></div>
<div class="a" style="left:0;top:0;width:901px;height:37px;background:#f2f2f2"></div>
</div>
<svg style="left:1383px;top:206px" width="12" height="12" viewBox="0 0 12 12"><path d="M0 0 L12 12 M12 0 L0 12" stroke="#1a1a1a" stroke-width="1.3"/></svg>
<div class="t" style="left:518.0px;top:250.4px;width:400px;text-align:center;font-size:15.5px;color:#e6e3dc;">Vidéo</div>
<div class="t" style="left:974.5px;top:250.4px;width:400px;text-align:center;font-size:15.5px;color:#e6e3dc;">Audio</div>
<div class="t" style="left:993.0px;top:487.4px;width:400px;text-align:center;font-size:15.5px;color:#e6e3dc;">Paramètres</div>
<div class="t" style="left:548.5px;top:294.4px;font-size:15.5px;color:#e6e3dc;">Mode débit binaire</div>
<div class="t" style="left:548.5px;top:325.9px;font-size:15.5px;color:#e6e3dc;">Débit binaire moyen (kBit/s)</div>
<div class="t" style="left:548.5px;top:356.9px;font-size:15.5px;color:#e6e3dc;">Débit binaire maximal (kBit/s)</div>
<div class="t" style="left:548.5px;top:387.9px;font-size:15.5px;color:#e6e3dc;">CPB (kOctet)</div>
<div class="t" style="left:548.5px;top:431.9px;font-size:15.5px;color:#e6e3dc;">Durée GOP maximale</div>
<div class="t" style="left:548.5px;top:462.9px;font-size:15.5px;color:#e6e3dc;">Structure GOP</div>
<div class="t" style="left:548.5px;top:506.9px;font-size:15.5px;color:#e6e3dc;">Profil</div>
<div class="t" style="left:548.5px;top:537.9px;font-size:15.5px;color:#e6e3dc;">Niveau :</div>
<div class="t" style="left:548.5px;top:581.9px;font-size:15.5px;color:#e6e3dc;">Qualité d'encodage</div>
<div class="t" style="left:548.5px;top:625.9px;font-size:15.5px;color:#e6e3dc;">Encodage matériel</div>
<div class="t" style="left:548.5px;top:656.4px;font-size:15.5px;color:#e6e3dc;">(copie intelligente)</div>
<div class="t" style="left:548.5px;top:687.9px;font-size:15.5px;color:#e6e3dc;">HRD</div>
<div class="t" style="left:998.0px;top:295.4px;font-size:15.5px;color:#e6e3dc;">Fréquence d'échantillonnage (Hz)</div>
<div class="t" style="left:998.0px;top:337.9px;font-size:15.5px;color:#e6e3dc;">Canaux :</div>
<div class="t" style="left:998.0px;top:381.9px;font-size:15.5px;color:#e6e3dc;">Débit binaire (KBit/s)</div>
<div class="t" style="left:998.0px;top:425.9px;font-size:15.5px;color:#e6e3dc;">Encodeur audio</div>
<div class="t" style="left:998.0px;top:531.9px;font-size:15.5px;color:#e6e3dc;">Entrelacement</div>
<div class="a" style="left:785px;top:294px;width:138px;height:25px;border:1.5px solid #d9d9d9"></div>
<div class="t" style="left:790.0px;top:298.7px;font-size:14.5px;color:#e3e3e3;">Variable</div>
<svg style="left:904px;top:303px" width="12" height="8" viewBox="0 0 12 8"><path d="M1 1 L6 6 L11 1" fill="none" stroke="#e3e3e3" stroke-width="1.6"/></svg>
<div class="a" style="left:785px;top:325px;width:69px;height:25px;border:1.5px solid #d9d9d9"></div>
<div class="t" style="left:785px;top:329.7px;width:64px;text-align:right;font-size:14.5px;color:#e3e3e3">6000</div>
<div class="a" style="left:785px;top:356px;width:69px;height:25px;border:1.5px solid #d9d9d9"></div>
<div class="t" style="left:785px;top:360.7px;width:64px;text-align:right;font-size:14.5px;color:#e3e3e3">9000</div>
<div class="a" style="left:785px;top:387px;width:69px;height:25px;border:1.5px solid #d9d9d9"></div>
<div class="t" style="left:785px;top:391.7px;width:64px;text-align:right;font-size:14.5px;color:#e3e3e3">224</div>
<div class="a" style="left:785px;top:431px;width:69px;height:25px;border:1.5px solid #d9d9d9"></div>
<div class="t" style="left:785px;top:435.7px;width:64px;text-align:right;font-size:14.5px;color:#e3e3e3">12</div>
<div class="a" style="left:785px;top:462px;width:138px;height:25px;border:1.5px solid #d9d9d9"></div>
<div class="t" style="left:790.0px;top:466.7px;font-size:14.5px;color:#e3e3e3;">IBBP</div>
<svg style="left:904px;top:471px" width="12" height="8" viewBox="0 0 12 8"><path d="M1 1 L6 6 L11 1" fill="none" stroke="#e3e3e3" stroke-width="1.6"/></svg>
<div class="a" style="left:785px;top:506px;width:138px;height:25px;border:1.5px solid #d9d9d9"></div>
<div class="t" style="left:790.0px;top:510.7px;font-size:14.5px;color:#e3e3e3;">MAIN</div>
<svg style="left:904px;top:515px" width="12" height="8" viewBox="0 0 12 8"><path d="M1 1 L6 6 L11 1" fill="none" stroke="#e3e3e3" stroke-width="1.6"/></svg>
<div class="a" style="left:785px;top:537px;width:138px;height:25px;border:1.5px solid #d9d9d9"></div>
<div class="t" style="left:790.0px;top:541.7px;font-size:14.5px;color:#e3e3e3;">MAIN</div>
<svg style="left:904px;top:546px" width="12" height="8" viewBox="0 0 12 8"><path d="M1 1 L6 6 L11 1" fill="none" stroke="#e3e3e3" stroke-width="1.6"/></svg>
<div class="a" style="left:785px;top:581px;width:138px;height:25px;border:1.5px solid #d9d9d9"></div>
<div class="t" style="left:790.0px;top:585.7px;font-size:14.5px;color:#e3e3e3;">Plus rapide</div>
<svg style="left:904px;top:590px" width="12" height="8" viewBox="0 0 12 8"><path d="M1 1 L6 6 L11 1" fill="none" stroke="#e3e3e3" stroke-width="1.6"/></svg>
<div class="a" style="left:785px;top:625px;width:138px;height:25px;border:1.5px solid #d9d9d9"></div>
<div class="t" style="left:790.0px;top:629.7px;font-size:14.5px;color:#e3e3e3;">désactivé</div>
<svg style="left:904px;top:634px" width="12" height="8" viewBox="0 0 12 8"><path d="M1 1 L6 6 L11 1" fill="none" stroke="#e3e3e3" stroke-width="1.6"/></svg>
<div class="a" style="left:789px;top:660px;width:17px;height:17px;border:2px solid #7a7a7a"></div>
<div class="a" style="left:789px;top:691px;width:17px;height:17px;border:2px solid #e0e0e0"></div>
<div class="a" style="left:1235px;top:294px;width:138px;height:25px;border:1.5px solid #d9d9d9"></div>
<div class="t" style="left:1240.0px;top:298.7px;font-size:14.5px;color:#e3e3e3;">48000</div>
<svg style="left:1354px;top:303px" width="12" height="8" viewBox="0 0 12 8"><path d="M1 1 L6 6 L11 1" fill="none" stroke="#e3e3e3" stroke-width="1.6"/></svg>
<div class="a" style="left:1235px;top:337px;width:138px;height:25px;border:1.5px solid #d9d9d9"></div>
<div class="t" style="left:1240.0px;top:341.7px;font-size:14.5px;color:#e3e3e3;">Mono</div>
<svg style="left:1354px;top:346px" width="12" height="8" viewBox="0 0 12 8"><path d="M1 1 L6 6 L11 1" fill="none" stroke="#e3e3e3" stroke-width="1.6"/></svg>
<div class="a" style="left:1235px;top:381px;width:138px;height:25px;border:1.5px solid #d9d9d9"></div>
<div class="t" style="left:1240.0px;top:385.7px;font-size:14.5px;color:#e3e3e3;">384</div>
<svg style="left:1354px;top:390px" width="12" height="8" viewBox="0 0 12 8"><path d="M1 1 L6 6 L11 1" fill="none" stroke="#e3e3e3" stroke-width="1.6"/></svg>
<div class="a" style="left:1235px;top:425px;width:138px;height:25px;border:1.5px solid #7a7a7a"></div>
<div class="t" style="left:1240.0px;top:429.7px;font-size:14.5px;color:#8a8a8a;">Calque MPEG 2</div>
<svg style="left:1354px;top:434px" width="12" height="8" viewBox="0 0 12 8"><path d="M1 1 L6 6 L11 1" fill="none" stroke="#8a8a8a" stroke-width="1.6"/></svg>
<div class="a" style="left:1235px;top:531px;width:138px;height:25px;border:1.5px solid #d9d9d9"></div>
<div class="t" style="left:1240.0px;top:535.7px;font-size:14.5px;color:#e3e3e3;">Progressif</div>
<svg style="left:1354px;top:540px" width="12" height="8" viewBox="0 0 12 8"><path d="M1 1 L6 6 L11 1" fill="none" stroke="#e3e3e3" stroke-width="1.6"/></svg>
<div class="a" style="left:979px;top:644px;width:413px;height:88px;border:1.5px solid #d9d9d9"></div>
<div class="t" style="left:984.0px;top:648.7px;font-size:14.5px;color:#e3e3e3;">Version: 2.0.5.3999</div>
<div class="a" style="left:529px;top:750px;width:106px;height:25px;background:#666"></div>
<div class="t" style="left:382.0px;top:753.9px;width:400px;text-align:center;font-size:15.5px;color:#dedede;">Aide</div>
<div class="a" style="left:1166px;top:750px;width:106px;height:25px;background:#666"></div>
<div class="t" style="left:1019.0px;top:753.9px;width:400px;text-align:center;font-size:15.5px;color:#dedede;">OK</div>
<div class="a" style="left:1285px;top:750px;width:106px;height:25px;background:#666"></div>
<div class="t" style="left:1138.0px;top:753.9px;width:400px;text-align:center;font-size:15.5px;color:#dedede;">Annuler</div>
<!-- ============ TASKBAR ============ -->
<div class="a" style="left:0;top:1019px;width:1920px;height:61px;background:#fde5c9;border-top:1px solid #e0cdb6"></div>
<svg style="left:27px;top:1036px" width="26" height="26" viewBox="0 0 26 26"><defs><linearGradient id="sun" x1="0" y1="0" x2="1" y2="1"><stop offset="0" stop-color="#f8b41c"/><stop offset="1" stop-color="#ec5a10"/></linearGradient></defs><circle cx="13" cy="13" r="12.5" fill="url(#sun)"/></svg>
<div class="t" style="left:64px;top:1033px;font-size:14px;color:#1f1f1f">10°C</div>
<div class="t" style="left:64px;top:1052px;font-size:14.5px;color:#555">Ensoleillé</div>
<svg style="left:621px;top:1036px" width="29" height="29" viewBox="0 0 29 29"><defs><linearGradient id="win" x1="0" y1="0" x2="1" y2="1"><stop offset="0" stop-color="#52d2fb"/><stop offset="1" stop-color="#0b6fd4"/></linearGradient></defs><path d="M0 1 Q0 0 1 0 H14 V14 H0 Z M15 0 H28 Q29 0 29 1 V14 H15 Z M0 15 H14 V29 H1 Q0 29 0 28 Z M15 15 H29 V28 Q29 29 28 29 H15 Z" fill="url(#win)"/></svg>
<div class="a" style="left:668px;top:1031px;width:146px;height:38px;background:#fff3e6;border-radius:19px"></div>
<svg style="left:695px;top:1042px" width="18" height="17" viewBox="0 0 18 17"><circle cx="7" cy="7" r="5.6" fill="none" stroke="#1c1c1c" stroke-width="1.8"/><path d="M11 11 L16.5 16.5" stroke="#1c1c1c" stroke-width="1.9"/></svg>
<div class="t" style="left:719px;top:1044.5px;font-size:14.5px;color:#1c1c1c">Recherche</div>
<svg style="left:831px;top:1036px" width="31" height="29" viewBox="0 0 31 29"><defs><linearGradient id="tv" x1="0" y1="0" x2="1" y2="1"><stop offset="0" stop-color="#f6f6f6"/><stop offset="1" stop-color="#c8c8c8"/></linearGradient></defs><rect x="0" y="8" width="22" height="21" rx="1.5" fill="#1e1e1e"/><rect x="8" y="0" width="22" height="20" rx="1.5" fill="url(#tv)" opacity="0.95"/></svg>
<svg style="left:886px;top:1036px" width="30" height="29" viewBox="0 0 30 29"><defs><linearGradient id="tm" x1="0" y1="0" x2="1" y2="1"><stop offset="0" stop-color="#7a6bd8"/><stop offset="1" stop-color="#4f58c9"/></linearGradient></defs><path d="M15 0 A14 14 0 1 1 9 27 L1 29 L3 22 A14 14 0 0 1 15 0 Z" fill="url(#tm)"/><rect x="6" y="9.5" width="13" height="10" rx="2" fill="#fff"/><path d="M20 12.5 L24 10 V19 L20 16.5 Z" fill="#fff"/></svg>
<svg style="left:941px;top:1035px" width="30" height="30" viewBox="0 0 30 30"><path d="M15 15 L2.01 7.5 A15 15 0 0 1 27.99 7.5 Z" fill="#e04335"/><path d="M15 15 L27.99 7.5 A15 15 0 0 1 15 30 Z" fill="#fbc02d"/><path d="M15 15 L15 30 A15 15 0 0 1 2.01 7.5 Z" fill="#21a456"/><circle cx="15" cy="15" r="7" fill="#fff"/><circle cx="15" cy="15" r="5.3" fill="#1a73e8"/></svg>
<div class="a" style="left:953px;top:1070px;width:9px;height:3px;border-radius:2px;background:#8a8278"></div>
<svg style="left:996px;top:1036px" width="31" height="28" viewBox="0 0 31 28"><defs><linearGradient id="cl" x1="0" y1="0" x2="1" y2="1"><stop offset="0" stop-color="#f28a4a"/><stop offset="1" stop-color="#f5a46e"/></linearGradient></defs><path d="M6 0 C-2 6 0 24 16 26 C24 27 31 26 30 21 C22 19 10 12 6 0 Z" fill="url(#cl)"/><path d="M6 3 C3 12 8 22 20 24" fill="none" stroke="#fcd8b8" stroke-width="1"/></svg>
<svg style="left:1053px;top:1035px" width="26" height="30" viewBox="0 0 26 30"><path d="M1 1 H18 L25 8 V29 H1 Z" fill="#fff" stroke="#6d6d6d" stroke-width="1.6"/><path d="M19 0 H26 V7 Z" fill="#6d6d6d"/></svg>
<svg style="left:1106px;top:1037px" width="30" height="27" viewBox="0 0 30 27"><path d="M0 2 Q0 0 2 0 H11 L13 3 H30 V27 H0 Z" fill="#e8b21a"/><rect x="0" y="5" width="30" height="22" fill="#fcd35a"/><rect x="5" y="19" width="20" height="8" rx="2" fill="#1d74d4"/><rect x="9" y="22.5" width="12" height="1.3" fill="#0b3f80"/></svg>
<svg style="left:1164px;top:1035px" width="23" height="30" viewBox="0 0 23 30"><rect x="0" y="0" width="23" height="30" rx="2" fill="#5f6a76"/><rect x="3" y="3" width="17" height="5" fill="#4fd1f5"/><g fill="#d4dbe3"><rect x="3" y="11" width="4.5" height="4"/><rect x="9.2" y="11" width="4.5" height="4"/><rect x="15.4" y="11" width="4.5" height="4"/><rect x="3" y="17" width="4.5" height="4"/><rect x="9.2" y="17" width="4.5" height="4"/><rect x="3" y="23" width="4.5" height="4"/><rect x="9.2" y="23" width="4.5" height="4"/></g><rect x="15.4" y="17" width="4.5" height="10" fill="#17437f"/></svg>
<svg style="left:1219px;top:1038px" width="25" height="25" viewBox="0 0 25 25"><rect x="0" y="0" width="25" height="25" rx="2" fill="#1a73e8"/><rect x="19" y="5" width="6" height="14" fill="#fbbc04"/><rect x="0" y="19" width="19" height="6" fill="#34a853"/><path d="M19 19 H25 L19 25 Z" fill="#ea4335"/><rect x="5" y="5" width="14" height="14" fill="#fff"/><text x="12" y="16.5" font-family="Liberation Sans" font-size="9.5" font-weight="bold" fill="#1a73e8" text-anchor="middle">31</text></svg>
<div class="a" style="left:1262px;top:1026px;width:48px;height:48px;background:#fdf0e3;border-radius:5px"></div>
<svg style="left:1271px;top:1035px" width="30" height="30" viewBox="0 0 20 20"><defs><linearGradient id="vg2" x1="0" y1="1" x2="1" y2="0"><stop offset="0" stop-color="#0a72f5"/><stop offset="1" stop-color="#05d4fb"/></linearGradient></defs><rect width="20" height="20" fill="url(#vg2)"/><path d="M1 1.2 L3.9 1.2 L7.9 11.7 L12.2 1.2 L18 1.2 L10.75 18.9 L5.05 18.9 L1 9.1 Z" fill="#fff"/></svg>
<div class="a" style="left:1276px;top:1070px;width:20px;height:4px;border-radius:2px;background:#0b6cd0"></div>
<svg style="left:1661px;top:1045px" width="17" height="10" viewBox="0 0 17 10"><path d="M1 9 L8.5 1.5 L16 9" fill="none" stroke="#1c1c1c" stroke-width="1.4"/></svg>
<svg style="left:1689px;top:1042px" width="21" height="14" viewBox="0 0 21 14"><path d="M5 13.5 A4.5 4.5 0 0 1 4.5 4.5 A6 6 0 0 1 15 4 A4.5 4.5 0 0 1 16 13.5 Z" fill="#c9c9c9" stroke="#222" stroke-width="1.2"/><path d="M3 12 L11 7 L19 12" fill="none" stroke="#777" stroke-width="1.3"/></svg>
<svg style="left:1724px;top:1042px" width="21" height="16" viewBox="0 0 21 16"><path d="M1 5 A14 14 0 0 1 20 5 M4 8.5 A9.5 9.5 0 0 1 17 8.5 M7 11.5 A5 5 0 0 1 14 11.5" fill="none" stroke="#1c1c1c" stroke-width="1.4"/><circle cx="10.5" cy="14.3" r="1.3" fill="#1c1c1c"/></svg>
<svg style="left:1754px;top:1042px" width="21" height="16" viewBox="0 0 21 16"><path d="M1 5 H4 L9 1 V15 L4 11 H1 Z" fill="none" stroke="#1c1c1c" stroke-width="1.3"/><path d="M12 5 A4 4 0 0 1 12 11" fill="none" stroke="#1c1c1c" stroke-width="1.3"/><path d="M15 2.5 A8 8 0 0 1 15 13.5" fill="none" stroke="#bbb" stroke-width="1.2"/><path d="M18 0.5 A11 11 0 0 1 18 15.5" fill="none" stroke="#d8cbbb" stroke-width="1.1"/></svg>
<svg style="left:1784px;top:1040px" width="21" height="17" viewBox="0 0 21 17"><rect x="1" y="4.5" width="16" height="11" rx="1.5" fill="none" stroke="#1c1c1c" stroke-width="1.4"/><rect x="4" y="7" width="11" height="6" fill="#1c1c1c"/><rect x="17.5" y="8" width="2.5" height="4" fill="#1c1c1c"/><path d="M4 0 L1.5 6 H4.5 L3 10" fill="none" stroke="#1c1c1c" stroke-width="1.2"/></svg>
<div class="t" style="left:1796px;top:1033px;width:100px;text-align:right;font-size:15px;color:#1c1c1c">16:45</div>
<div class="t" style="left:1796px;top:1053px;width:100px;text-align:right;font-size:14.5px;color:#1c1c1c">11/02/2023</div>
<!-- tooltip -->
<div class="a" style="left:1142px;top:966px;width:102px;height:38px;background:#e5e6ea;border-radius:4px;border:1px solid #cfd0d4"></div>
<div class="t" style="left:1153px;top:977px;font-size:15px;color:#1c1c1c">Calculatrice</div>

</body></html>
